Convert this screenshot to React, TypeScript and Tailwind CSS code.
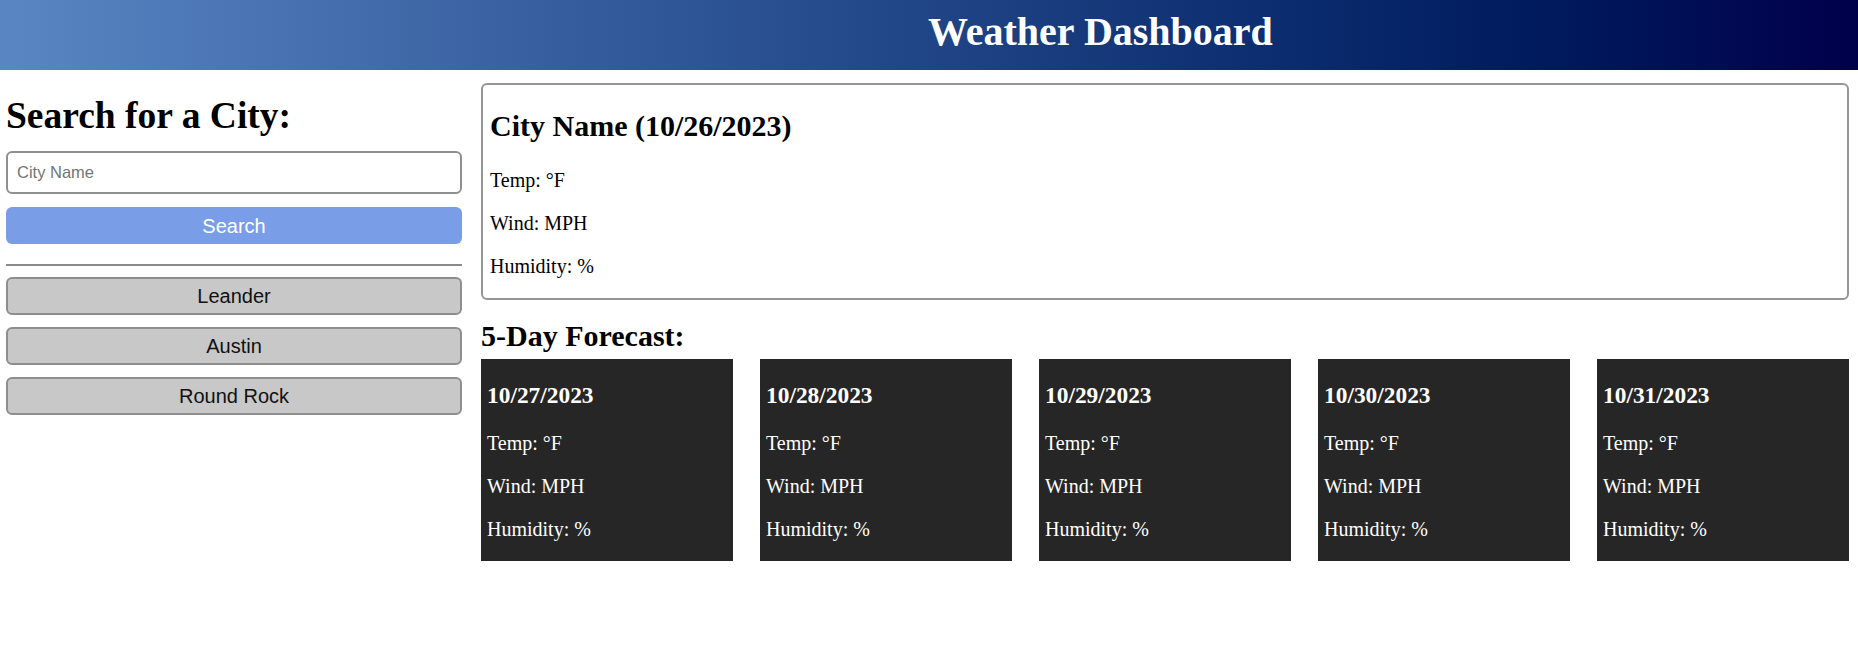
const history = ["Leander", "Austin", "Round Rock"];

const forecast = [
  "10/27/2023",
  "10/28/2023",
  "10/29/2023",
  "10/30/2023",
  "10/31/2023",
];

function Stats() {
  return (
    <>
      <p className="mt-0 mb-[20px] text-[20px] leading-[23px]">Temp: °F</p>
      <p className="mt-0 mb-[20px] text-[20px] leading-[23px]">Wind: MPH</p>
      <p className="mt-0 mb-[20px] text-[20px] leading-[23px]">Humidity: %</p>
    </>
  );
}

export default function App() {
  return (
    <div className="min-h-screen bg-white font-['Liberation_Serif','Times_New_Roman',serif] text-black">
      <header className="flex h-[70px] bg-linear-to-r from-[#5a86c4] to-[#00004a]">
        <div className="w-[928px] shrink-0" />
        <h1 className="pt-[9px] text-[40px] leading-[46px] font-bold text-white">
          Weather Dashboard
        </h1>
      </header>

      <main className="flex">
        <aside className="ml-[6px] w-[456px] shrink-0">
          <h2 className="mt-[24.5px] mb-[14.5px] text-[37.5px] leading-[42px] font-bold">
            Search for a City:
          </h2>
          <input
            type="text"
            placeholder="City Name"
            className="block h-[43px] w-full rounded-[6px] border-2 border-[#8f8f8f] px-[9px] font-['Liberation_Sans',Arial,sans-serif] text-[16.5px] outline-none placeholder:text-[#757575]"
          />
          <button className="mt-[13px] block h-[37px] w-full rounded-[6px] bg-[#7a9de8] font-['Liberation_Sans',Arial,sans-serif] text-[20px] text-white">
            Search
          </button>
          <hr className="mt-[20px] mb-[11px] border-t-2 border-[#8a8a8a]" />
          <div className="flex flex-col gap-[12px]">
            {history.map((city) => (
              <button
                key={city}
                className="h-[38px] w-full rounded-[6px] border-2 border-[#8e8e8e] bg-[#c8c8c8] font-['Liberation_Sans',Arial,sans-serif] text-[20px] text-[#111]"
              >
                {city}
              </button>
            ))}
          </div>
        </aside>

        <section className="mr-[9px] ml-[19px] flex-1">
          <div className="mt-[13px] rounded-[6px] border-[2.5px] border-[#959595] px-[7px]">
            <h2 className="mt-[24px] mb-[25px] text-[30px] leading-[34.5px] font-bold">
              City Name (10/26/2023)
            </h2>
            <Stats />
          </div>

          <h2 className="mt-[19px] mb-[5.5px] text-[30px] leading-[34.5px] font-bold">
            5-Day Forecast:
          </h2>
          <div className="grid grid-cols-5 gap-[27px]">
            {forecast.map((date) => (
              <div key={date} className="bg-[#262626] px-[6px] text-white">
                <h3 className="mt-[23.4px] mb-[23.4px] text-[23.4px] leading-[27px] font-bold">
                  {date}
                </h3>
                <Stats />
              </div>
            ))}
          </div>
        </section>
      </main>
    </div>
  );
}
